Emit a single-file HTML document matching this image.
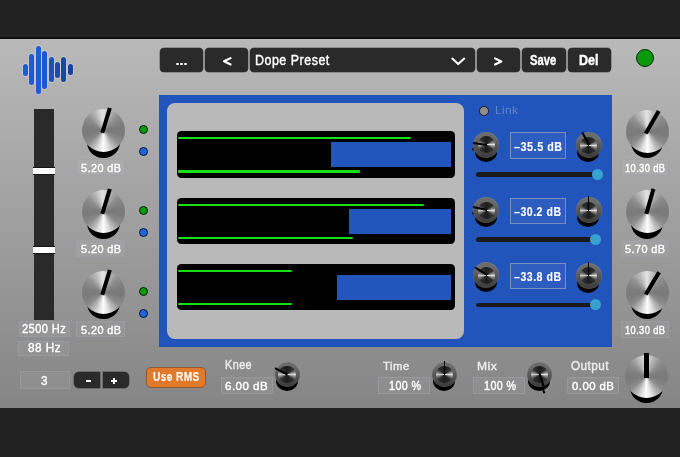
<!DOCTYPE html><html><head><meta charset="utf-8"><style>
*{margin:0;padding:0;box-sizing:border-box}
html,body{width:680px;height:457px;overflow:hidden;background:#222;font-family:"Liberation Sans",sans-serif}
div{position:absolute}
.t{white-space:nowrap;line-height:1;transform-origin:0 0}
.panel{left:0;top:39px;width:680px;height:369px;background:linear-gradient(#b9b9b9,#858585)}
.btn{background:#2a2a2a;border-radius:4px;box-shadow:0 0 0 0.5px rgba(0,0,0,0.45)}
.bk{border-radius:50%;background:conic-gradient(#e0e0e0 0deg,#b4b4b4 20deg,#8e8e8e 45deg,#7c7c7c 75deg,#7a7a7a 100deg,#8c8c8c 128deg,#b4b4b4 148deg,#e2e2e2 166deg,#fcfcfc 180deg,#e2e2e2 194deg,#b4b4b4 212deg,#8a8a8a 232deg,#7a7a7a 260deg,#7e7e7e 285deg,#8e8e8e 310deg,#b8b8b8 335deg,#e0e0e0 355deg,#e0e0e0 360deg)}
.bkshadow{border-radius:50%;background:#000;filter:blur(0.4px)}
.bind{background:#000;transform-origin:50% 100%}
.skshadow{border-radius:50%;background:#000;filter:blur(0.5px)}
.skring{border-radius:50%;background:linear-gradient(rgba(255,255,255,0.1) 20%,rgba(0,0,0,0.3) 90%),radial-gradient(circle,#5a5a5a 0 64%,#7a7a7a 74%,#8c8c8c 88%,#a2a2a2 96%,#888 100%)}
.skin{border-radius:50%;background:conic-gradient(#1c1c1c 0deg,#2e2e2e 50deg,#9a9a9a 78deg,#dcdcdc 90deg,#9a9a9a 102deg,#2e2e2e 130deg,#1c1c1c 180deg,#2e2e2e 230deg,#8a8a8a 258deg,#c8c8c8 270deg,#8a8a8a 282deg,#2e2e2e 310deg,#1c1c1c 360deg)}
.sind{background:#000;transform-origin:50% 100%}
.vb{border:1px solid;background:rgba(255,255,255,0.05)}
.t{-webkit-text-stroke:0.4px currentColor}
.led{border-radius:50%;border:1px solid #111}
</style></head><body>
<div class="panel"></div>
<div style="left:0;top:37px;width:680px;height:2px;background:linear-gradient(#141414,#0a0a0a)"></div>
<div style="left:22.9px;top:63.6px;width:5px;height:12.1px;background:#1d5cd4;border-radius:2.5px;box-shadow:0 0 0 0.8px rgba(225,225,225,0.45)"></div>
<div style="left:29.3px;top:53.8px;width:5px;height:31.5px;background:#1d5cd4;border-radius:2.5px;box-shadow:0 0 0 0.8px rgba(225,225,225,0.45)"></div>
<div style="left:35.6px;top:45.9px;width:5px;height:47.7px;background:#1d5cd4;border-radius:2.5px;box-shadow:0 0 0 0.8px rgba(225,225,225,0.45)"></div>
<div style="left:42.2px;top:50.5px;width:5px;height:38.1px;background:#1c58cc;border-radius:2.5px;box-shadow:0 0 0 0.8px rgba(225,225,225,0.45)"></div>
<div style="left:48.8px;top:57.3px;width:5px;height:24.7px;background:#1b52bb;border-radius:2.5px;box-shadow:0 0 0 0.8px rgba(225,225,225,0.45)"></div>
<div style="left:54.9px;top:61.7px;width:5px;height:16.3px;background:#1a4cae;border-radius:2.5px;box-shadow:0 0 0 0.8px rgba(225,225,225,0.45)"></div>
<div style="left:61.3px;top:57px;width:5px;height:25.3px;background:#1a47a2;border-radius:2.5px;box-shadow:0 0 0 0.8px rgba(225,225,225,0.45)"></div>
<div style="left:67.7px;top:64.3px;width:5px;height:11.1px;background:#194299;border-radius:2.5px;box-shadow:0 0 0 0.8px rgba(225,225,225,0.45)"></div>
<div class="btn" style="left:160px;top:48px;width:43.00px;height:24.40px;"></div>
<div class="btn" style="left:205px;top:48px;width:43.00px;height:24.40px;"></div>
<div class="btn" style="left:250px;top:48px;width:225.00px;height:24.40px;"></div>
<div class="btn" style="left:477px;top:48px;width:43.00px;height:24.40px;"></div>
<div class="btn" style="left:522px;top:48px;width:43.50px;height:24.40px;"></div>
<div class="btn" style="left:567.5px;top:48px;width:43.50px;height:24.40px;"></div>
<div class="" style="left:176.0px;top:62.5px;width:2.60px;height:2.60px;background:#fff;border-radius:50%"></div>
<div class="" style="left:180.0px;top:62.5px;width:2.60px;height:2.60px;background:#fff;border-radius:50%"></div>
<div class="" style="left:184.0px;top:62.5px;width:2.60px;height:2.60px;background:#fff;border-radius:50%"></div>
<svg style="position:absolute;left:0;top:0" width="680" height="100"><path d="M230.6 58.1 L224 61.3 L230.6 64.5" stroke="#fff" stroke-width="2.1" fill="none" stroke-linecap="round" stroke-linejoin="round"/><path d="M495 58.4 L501.3 61.45 L495 64.5" stroke="#fff" stroke-width="2.1" fill="none" stroke-linecap="round" stroke-linejoin="round"/></svg>
<svg style="position:absolute;left:450px;top:56px" width="17" height="11"><path d="M2.3 2.6 L8.2 8.1 L14.2 2.6" stroke="#fff" stroke-width="2.1" fill="none" stroke-linecap="round" stroke-linejoin="round"/></svg>
<div class="led" style="left:635.5px;top:49.2px;width:18px;height:18px;background:#0a990a;border-color:#062806"></div>
<div class="" style="left:159px;top:95.4px;width:453.00px;height:251.60px;background:#2255bb"></div>
<div class="" style="left:167px;top:103px;width:297.00px;height:236.00px;background:#b9b9b9;border-radius:8px"></div>
<div class="" style="left:177px;top:131px;width:278.00px;height:46.60px;background:#000;border-radius:4.5px"></div>
<div class="" style="left:178px;top:137px;width:233.00px;height:2.40px;background:#14e014;border-radius:1px"></div>
<div class="" style="left:178px;top:170.4px;width:182.00px;height:2.40px;background:#14e014;border-radius:1px"></div>
<div class="" style="left:331px;top:142px;width:120.00px;height:25.00px;background:#2256bd"></div>
<div class="" style="left:177px;top:197.6px;width:278.00px;height:46.60px;background:#000;border-radius:4.5px"></div>
<div class="" style="left:178px;top:203.6px;width:246.00px;height:2.40px;background:#14e014;border-radius:1px"></div>
<div class="" style="left:178px;top:237.0px;width:175.00px;height:2.40px;background:#14e014;border-radius:1px"></div>
<div class="" style="left:349px;top:208.6px;width:102.00px;height:25.00px;background:#2256bd"></div>
<div class="" style="left:177px;top:263.6px;width:278.00px;height:46.60px;background:#000;border-radius:4.5px"></div>
<div class="" style="left:178px;top:269.6px;width:114.00px;height:2.40px;background:#14e014;border-radius:1px"></div>
<div class="" style="left:178px;top:303.0px;width:114.00px;height:2.40px;background:#14e014;border-radius:1px"></div>
<div class="" style="left:337px;top:274.6px;width:114.00px;height:25.00px;background:#2256bd"></div>
<div class="led" style="left:479.4px;top:106.2px;width:9.5px;height:9.5px;background:#8e8e8e;border-color:#1a1a1a"></div>
<div class="skshadow" style="left:474.9px;top:141.6px;width:22px;height:20px"></div>
<div class="sind" style="left:485.29999999999995px;top:136.6px;width:2.2px;height:14.0px;transform:rotate(-82deg);filter:blur(0.4px)"></div>
<div class="skring" style="left:473.4px;top:131.6px;width:26px;height:26px"></div>
<div class="skin" style="left:477.79999999999995px;top:136.3px;width:17.2px;height:17.2px"></div>
<div class="sind" style="left:485.5px;top:130.6px;width:1.8px;height:14.0px;transform:rotate(-82deg)"></div>
<div class="skshadow" style="left:577.1px;top:142px;width:22px;height:20px"></div>
<div class="sind" style="left:587.5px;top:137.0px;width:2.2px;height:14.0px;transform:rotate(-28deg);filter:blur(0.4px)"></div>
<div class="skring" style="left:575.6px;top:132.0px;width:26px;height:26px"></div>
<div class="skin" style="left:580.0px;top:136.70000000000002px;width:17.2px;height:17.2px"></div>
<div class="sind" style="left:587.7px;top:131.0px;width:1.8px;height:14.0px;transform:rotate(-28deg)"></div>
<div class="vb" style="left:509.8px;top:132.3px;width:56.00px;height:26.70px;border-color:rgba(170,175,195,0.6)"></div>
<div class="" style="left:476px;top:172px;width:122.00px;height:4.50px;background:#1a1a1a;border-radius:3px"></div>
<div style="left:591.5px;top:168.5px;width:11px;height:11px;border-radius:50%;background:#36a2cf"></div>
<div class="skshadow" style="left:474.9px;top:206.89999999999998px;width:22px;height:20px"></div>
<div class="sind" style="left:485.29999999999995px;top:201.89999999999998px;width:2.2px;height:14.0px;transform:rotate(-78deg);filter:blur(0.4px)"></div>
<div class="skring" style="left:473.4px;top:196.89999999999998px;width:26px;height:26px"></div>
<div class="skin" style="left:477.79999999999995px;top:201.6px;width:17.2px;height:17.2px"></div>
<div class="sind" style="left:485.5px;top:195.89999999999998px;width:1.8px;height:14.0px;transform:rotate(-78deg)"></div>
<div class="skshadow" style="left:577.1px;top:207.3px;width:22px;height:20px"></div>
<div class="sind" style="left:587.5px;top:202.3px;width:2.2px;height:14.0px;transform:rotate(0deg);filter:blur(0.4px)"></div>
<div class="skring" style="left:575.6px;top:197.3px;width:26px;height:26px"></div>
<div class="skin" style="left:580.0px;top:202.00000000000003px;width:17.2px;height:17.2px"></div>
<div class="sind" style="left:587.7px;top:196.3px;width:1.8px;height:14.0px;transform:rotate(0deg)"></div>
<div class="vb" style="left:509.8px;top:197.60000000000002px;width:56.00px;height:26.70px;border-color:rgba(170,175,195,0.6)"></div>
<div class="" style="left:476px;top:237.3px;width:122.00px;height:4.50px;background:#1a1a1a;border-radius:3px"></div>
<div style="left:589.5px;top:233.8px;width:11px;height:11px;border-radius:50%;background:#36a2cf"></div>
<div class="skshadow" style="left:474.9px;top:272.1px;width:22px;height:20px"></div>
<div class="sind" style="left:485.29999999999995px;top:267.1px;width:2.2px;height:14.0px;transform:rotate(-58deg);filter:blur(0.4px)"></div>
<div class="skring" style="left:473.4px;top:262.1px;width:26px;height:26px"></div>
<div class="skin" style="left:477.79999999999995px;top:266.8px;width:17.2px;height:17.2px"></div>
<div class="sind" style="left:485.5px;top:261.1px;width:1.8px;height:14.0px;transform:rotate(-58deg)"></div>
<div class="skshadow" style="left:577.1px;top:272.5px;width:22px;height:20px"></div>
<div class="sind" style="left:587.5px;top:267.5px;width:2.2px;height:14.0px;transform:rotate(0deg);filter:blur(0.4px)"></div>
<div class="skring" style="left:575.6px;top:262.5px;width:26px;height:26px"></div>
<div class="skin" style="left:580.0px;top:267.2px;width:17.2px;height:17.2px"></div>
<div class="sind" style="left:587.7px;top:261.5px;width:1.8px;height:14.0px;transform:rotate(0deg)"></div>
<div class="vb" style="left:509.8px;top:262.8px;width:56.00px;height:26.70px;border-color:rgba(170,175,195,0.6)"></div>
<div class="" style="left:476px;top:302.5px;width:122.00px;height:4.50px;background:#1a1a1a;border-radius:3px"></div>
<div style="left:589.5px;top:299.0px;width:11px;height:11px;border-radius:50%;background:#36a2cf"></div>
<div class="" style="left:34.3px;top:108.7px;width:20.00px;height:210.90px;background:#2a2a2a"></div>
<div class="" style="left:33.3px;top:167.2px;width:22.00px;height:1.00px;background:#151515"></div>
<div class="" style="left:33.3px;top:168.2px;width:22.00px;height:5.60px;background:#fff"></div>
<div class="" style="left:33.3px;top:173.79999999999998px;width:22.00px;height:1.00px;background:#151515"></div>
<div class="" style="left:33.3px;top:246px;width:22.00px;height:1.00px;background:#151515"></div>
<div class="" style="left:33.3px;top:247px;width:22.00px;height:5.60px;background:#fff"></div>
<div class="" style="left:33.3px;top:252.6px;width:22.00px;height:1.00px;background:#151515"></div>
<div class="vb" style="left:18.5px;top:321px;width:51.50px;height:16.40px;border-color:rgba(155,160,168,0.6)"></div>
<div class="vb" style="left:18.3px;top:340.5px;width:51.20px;height:15.80px;border-color:rgba(155,160,168,0.6)"></div>
<div class="bkshadow" style="left:87.15px;top:125.55000000000001px;width:32.5px;height:32.5px"></div>
<div class="bk" style="left:81.9px;top:109.4px;width:43px;height:43px"></div>
<div class="bind" style="left:101.30000000000001px;top:107.4px;width:4.2px;height:25.5px;transform-origin:50% 23.5px;transform:rotate(17deg)"></div>
<div class="vb" style="left:76.4px;top:159.4px;width:48.60px;height:16.30px;border-color:rgba(155,160,168,0.6)"></div>
<div class="led" style="left:138.8px;top:124.8px;width:9.4px;height:9.4px;background:#0a990a;border-color:#062006"></div>
<div class="led" style="left:138.8px;top:146.8px;width:9.4px;height:9.4px;background:#2166d8;border-color:#08183a"></div>
<div class="bkshadow" style="left:87.15px;top:206.05px;width:32.5px;height:32.5px"></div>
<div class="bk" style="left:81.9px;top:189.9px;width:43px;height:43px"></div>
<div class="bind" style="left:101.30000000000001px;top:187.9px;width:4.2px;height:25.5px;transform-origin:50% 23.5px;transform:rotate(17deg)"></div>
<div class="vb" style="left:76.4px;top:240.3px;width:48.60px;height:16.30px;border-color:rgba(155,160,168,0.6)"></div>
<div class="led" style="left:138.8px;top:205.8px;width:9.4px;height:9.4px;background:#0a990a;border-color:#062006"></div>
<div class="led" style="left:138.8px;top:227.8px;width:9.4px;height:9.4px;background:#2166d8;border-color:#08183a"></div>
<div class="bkshadow" style="left:87.15px;top:286.84999999999997px;width:32.5px;height:32.5px"></div>
<div class="bk" style="left:81.9px;top:270.7px;width:43px;height:43px"></div>
<div class="bind" style="left:101.30000000000001px;top:268.7px;width:4.2px;height:25.5px;transform-origin:50% 23.5px;transform:rotate(17deg)"></div>
<div class="vb" style="left:76.4px;top:321.20000000000005px;width:48.60px;height:16.30px;border-color:rgba(155,160,168,0.6)"></div>
<div class="led" style="left:138.8px;top:286.8px;width:9.4px;height:9.4px;background:#0a990a;border-color:#062006"></div>
<div class="led" style="left:138.8px;top:308.8px;width:9.4px;height:9.4px;background:#2166d8;border-color:#08183a"></div>
<div class="bkshadow" style="left:630.95px;top:125.85px;width:32.5px;height:32.5px"></div>
<div class="bk" style="left:625.7px;top:109.69999999999999px;width:43px;height:43px"></div>
<div class="bind" style="left:645.1px;top:107.69999999999999px;width:4.2px;height:25.5px;transform-origin:50% 23.5px;transform:rotate(30deg)"></div>
<div class="vb" style="left:620.7px;top:159.2px;width:48.10px;height:16.50px;border-color:rgba(155,160,168,0.6)"></div>
<div class="bkshadow" style="left:630.95px;top:206.25px;width:32.5px;height:32.5px"></div>
<div class="bk" style="left:625.7px;top:190.1px;width:43px;height:43px"></div>
<div class="bind" style="left:645.1px;top:188.1px;width:4.2px;height:25.5px;transform-origin:50% 23.5px;transform:rotate(16deg)"></div>
<div class="vb" style="left:620.7px;top:240.1px;width:48.10px;height:16.50px;border-color:rgba(155,160,168,0.6)"></div>
<div class="bkshadow" style="left:630.95px;top:286.84999999999997px;width:32.5px;height:32.5px"></div>
<div class="bk" style="left:625.7px;top:270.7px;width:43px;height:43px"></div>
<div class="bind" style="left:645.1px;top:268.7px;width:4.2px;height:25.5px;transform-origin:50% 23.5px;transform:rotate(31deg)"></div>
<div class="vb" style="left:620.7px;top:321.0px;width:48.10px;height:16.50px;border-color:rgba(155,160,168,0.6)"></div>
<div class="vb" style="left:19.6px;top:371.1px;width:50.50px;height:17.50px;border-color:rgba(155,160,168,0.6)"></div>
<div class="btn" style="left:73.6px;top:371.9px;width:26.2px;height:15.9px;border-radius:5px 0 0 5px"></div>
<div class="btn" style="left:102.5px;top:371.9px;width:26.3px;height:15.9px;border-radius:0 5px 5px 0"></div>
<div class="" style="left:86px;top:379.8px;width:5.00px;height:2.30px;background:#fff"></div>
<div class="" style="left:111.3px;top:379.8px;width:6.10px;height:2.30px;background:#fff"></div>
<div class="" style="left:113.2px;top:377.9px;width:2.30px;height:6.10px;background:#fff"></div>
<div style="left:145.8px;top:367.2px;width:60.4px;height:20.7px;background:#e07a2a;border-radius:5px;border:1px solid rgba(90,70,60,0.6)"></div>
<div class="vb" style="left:221px;top:377.2px;width:51.70px;height:17.20px;border-color:rgba(155,160,168,0.6)"></div>
<div class="skshadow" style="left:275.5px;top:371px;width:22px;height:20px"></div>
<div class="sind" style="left:285.9px;top:366.5px;width:2.2px;height:13.5px;transform:rotate(-62deg);filter:blur(0.4px)"></div>
<div class="skring" style="left:274.5px;top:361.5px;width:25px;height:25px"></div>
<div class="skin" style="left:278.4px;top:365.7px;width:17.2px;height:17.2px"></div>
<div class="sind" style="left:286.1px;top:360.5px;width:1.8px;height:13.5px;transform:rotate(-62deg)"></div>
<div class="vb" style="left:378.4px;top:377.2px;width:52.00px;height:17.10px;border-color:rgba(155,160,168,0.6)"></div>
<div class="skshadow" style="left:433.1px;top:371.3px;width:22px;height:20px"></div>
<div class="sind" style="left:443.5px;top:366.8px;width:2.2px;height:13.5px;transform:rotate(0deg);filter:blur(0.4px)"></div>
<div class="skring" style="left:432.1px;top:361.8px;width:25px;height:25px"></div>
<div class="skin" style="left:436.0px;top:366.0px;width:17.2px;height:17.2px"></div>
<div class="sind" style="left:443.70000000000005px;top:360.8px;width:1.8px;height:13.5px;transform:rotate(0deg)"></div>
<div class="vb" style="left:473.4px;top:377.2px;width:52.00px;height:17.10px;border-color:rgba(155,160,168,0.6)"></div>
<div class="skshadow" style="left:528.1px;top:371.3px;width:22px;height:20px"></div>
<div class="sind" style="left:538.5px;top:366.8px;width:2.2px;height:13.5px;transform:rotate(162deg);filter:blur(0.4px)"></div>
<div class="skring" style="left:527.1px;top:361.8px;width:25px;height:25px"></div>
<div class="skin" style="left:531.0px;top:366.0px;width:17.2px;height:17.2px"></div>
<div class="sind" style="left:538.7px;top:360.8px;width:1.8px;height:13.5px;transform:rotate(162deg)"></div>
<div class="vb" style="left:567.1px;top:377.2px;width:52.10px;height:17.20px;border-color:rgba(155,160,168,0.6)"></div>
<div class="bkshadow" style="left:630.25px;top:370.95px;width:32.5px;height:32.5px"></div>
<div class="bk" style="left:625.0px;top:354.8px;width:43px;height:43px"></div>
<div class="bind" style="left:644.4px;top:352.8px;width:4.2px;height:25.5px;transform-origin:50% 23.5px;transform:rotate(0deg)"></div>
<div class="t" style="left:254.60px;top:52.70px;font-size:14.35px;font-weight:400;color:#fff;letter-spacing:0.04em;transform:scaleX(0.869);">Dope Preset</div>
<div class="t" style="left:530.36px;top:53.19px;font-size:14.71px;font-weight:700;color:#fff;letter-spacing:0.0em;transform:scaleX(0.760);">Save</div>
<div class="t" style="left:578.92px;top:52.96px;font-size:14.52px;font-weight:700;color:#fff;letter-spacing:0.0em;transform:scaleX(0.863);">Del</div>
<div class="t" style="left:495.26px;top:104.29px;font-size:11.78px;font-weight:400;color:#6483c6;letter-spacing:0.04em;transform:scaleX(0.999);-webkit-text-stroke:0">Link</div>
<div class="t" style="left:513.88px;top:140.52px;font-size:12.33px;font-weight:700;color:#fff;letter-spacing:0.05em;transform:scaleX(0.874);-webkit-text-stroke:0.1px #fff">&#8211;35.5 dB</div>
<div class="t" style="left:514.28px;top:205.82px;font-size:12.33px;font-weight:700;color:#fff;letter-spacing:0.05em;transform:scaleX(0.855);-webkit-text-stroke:0.1px #fff">&#8211;30.2 dB</div>
<div class="t" style="left:514.48px;top:271.02px;font-size:12.33px;font-weight:700;color:#fff;letter-spacing:0.05em;transform:scaleX(0.855);-webkit-text-stroke:0.1px #fff">&#8211;33.8 dB</div>
<div class="t" style="left:22.05px;top:323.44px;font-size:12.43px;font-weight:400;color:#fff;letter-spacing:0.04em;transform:scaleX(0.888);">2500 Hz</div>
<div class="t" style="left:27.63px;top:342.38px;font-size:12.14px;font-weight:400;color:#fff;letter-spacing:0.04em;transform:scaleX(0.968);">88 Hz</div>
<div class="t" style="left:80.86px;top:161.99px;font-size:11.78px;font-weight:400;color:#fff;letter-spacing:0.04em;transform:scaleX(0.924);">5.20 dB</div>
<div class="t" style="left:80.86px;top:242.89px;font-size:11.78px;font-weight:400;color:#fff;letter-spacing:0.04em;transform:scaleX(0.924);">5.20 dB</div>
<div class="t" style="left:80.86px;top:323.79px;font-size:11.78px;font-weight:400;color:#fff;letter-spacing:0.04em;transform:scaleX(0.924);">5.20 dB</div>
<div class="t" style="left:624.85px;top:161.99px;font-size:11.78px;font-weight:400;color:#fff;letter-spacing:0.04em;transform:scaleX(0.794);">10.30 dB</div>
<div class="t" style="left:625.07px;top:242.89px;font-size:11.78px;font-weight:400;color:#fff;letter-spacing:0.04em;transform:scaleX(0.922);">5.70 dB</div>
<div class="t" style="left:624.85px;top:323.79px;font-size:11.78px;font-weight:400;color:#fff;letter-spacing:0.04em;transform:scaleX(0.794);">10.30 dB</div>
<div class="t" style="left:41.23px;top:373.73px;font-size:13.14px;font-weight:400;color:#fff;letter-spacing:0.04em;transform:scaleX(0.890);">3</div>
<div class="t" style="left:152.69px;top:371.28px;font-size:12.14px;font-weight:700;color:#fff;letter-spacing:0.04em;transform:scaleX(0.836);-webkit-text-stroke:0.1px #fff">Use RMS</div>
<div class="t" style="left:224.83px;top:359.45px;font-size:12.17px;font-weight:400;color:#ededed;letter-spacing:0.04em;transform:scaleX(0.892);">Knee</div>
<div class="t" style="left:225.32px;top:380.72px;font-size:11.51px;font-weight:400;color:#fff;letter-spacing:0.04em;transform:scaleX(1.005);">6.00 dB</div>
<div class="t" style="left:383.27px;top:360.10px;font-size:11.64px;font-weight:400;color:#ededed;letter-spacing:0.04em;transform:scaleX(0.978);">Time</div>
<div class="t" style="left:388.74px;top:380.24px;font-size:12.43px;font-weight:400;color:#fff;letter-spacing:0.04em;transform:scaleX(0.863);">100 %</div>
<div class="t" style="left:476.93px;top:360.10px;font-size:11.64px;font-weight:400;color:#ededed;letter-spacing:0.04em;transform:scaleX(1.043);">Mix</div>
<div class="t" style="left:483.74px;top:380.24px;font-size:12.43px;font-weight:400;color:#fff;letter-spacing:0.04em;transform:scaleX(0.863);">100 %</div>
<div class="t" style="left:571.31px;top:359.60px;font-size:12.00px;font-weight:400;color:#ededed;letter-spacing:0.04em;transform:scaleX(0.976);">Output</div>
<div class="t" style="left:572.45px;top:380.72px;font-size:11.51px;font-weight:400;color:#fff;letter-spacing:0.04em;transform:scaleX(0.988);">0.00 dB</div>
</body></html>
